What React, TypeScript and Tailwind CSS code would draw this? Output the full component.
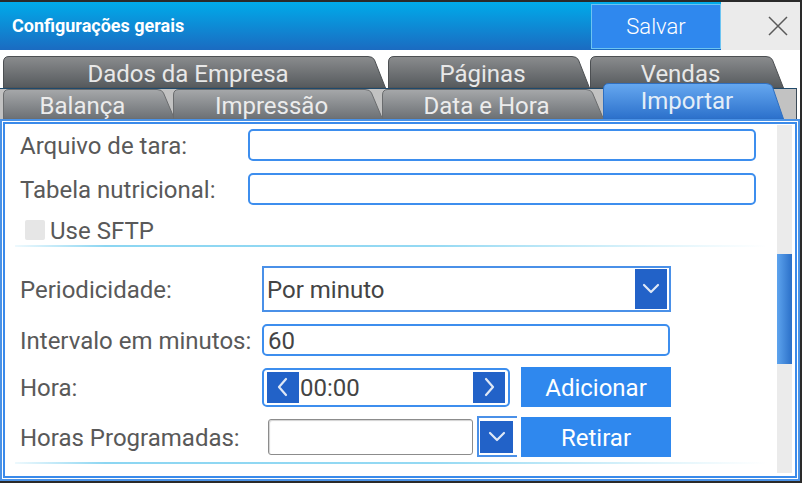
import React from 'react';

type TabProps = {
  id: string;
  w: number;
  h: number;
  label: string;
  top: string;
  bottom: string;
  stroke: string;
  className: string;
  textClass: string;
};

function Tab({ id, w, h, label, top, bottom, stroke, className, textClass }: TabProps) {
  const s = 13;
  const d = `M0.5,${h} V6 Q0.5,0.5 6,0.5 H${w - s - 5} Q${w - s},0.5 ${w - s + 1.5},4 L${w - 0.5},${h} Z`;
  return (
    <div className={`relative shrink-0 ${className}`}>
      <svg className="absolute inset-0" width={w} height={h} viewBox={`0 0 ${w} ${h}`}>
        <defs>
          <linearGradient id={id} x1="0" y1="0" x2="0" y2="1">
            <stop offset="0" stopColor={top} />
            <stop offset="1" stopColor={bottom} />
          </linearGradient>
        </defs>
        <path d={d} fill={`url(#${id})`} stroke={stroke} strokeWidth="1" />
      </svg>
      <div className={`absolute inset-0 flex items-center justify-center pr-[13px] text-[24px] leading-none ${textClass}`}>
        {label}
      </div>
    </div>
  );
}

function Chevron({ dir }: { dir: 'down' | 'left' | 'right' }) {
  const pts =
    dir === 'down' ? '9,12 16,19 23,12' : dir === 'left' ? '19,8 12,16 19,24' : '13,8 20,16 13,24';
  return (
    <svg width="32" height="32" viewBox="0 0 32 32" className="block">
      <polyline points={pts} fill="none" stroke="#dfe8f6" strokeWidth="2.2" strokeLinecap="round" strokeLinejoin="round" />
    </svg>
  );
}

function Divider() {
  return (
    <div className="-ml-[5px] -mr-[11px] h-[2px] bg-[linear-gradient(to_right,rgba(140,214,242,0.15),#8cd6f2_12%,#94d9f3_55%,rgba(200,236,248,0.6)_85%,rgba(255,255,255,0))]" />
  );
}

export default function App() {
  const label = "text-[24px] text-[#595959] leading-none pt-[2px]";
  return (
    <div className="w-[802px] h-[483px] bg-white border-t-2 border-r-2 border-b-2 border-[#2a2a2a] flex flex-col overflow-hidden font-['Roboto',sans-serif]">
      {/* Title bar */}
      <div className="h-[48px] shrink-0 flex items-stretch bg-[linear-gradient(to_bottom,#00abea,#1b6bc1)]">
        <div className="flex-1 flex items-center pl-[12px] text-white font-bold text-[18px] pb-[2px]">
          Configurações gerais
        </div>
        <div className="w-[130px] mt-[2px] mb-[1px] bg-[#2f88ee] border border-[#6cc4f2] flex items-center justify-center text-white text-[22px] font-light">
          Salvar
        </div>
        <div className="w-[79px] bg-[#ebebeb] flex items-center justify-end pr-[12px]">
          <svg width="20" height="20" viewBox="0 0 20 20">
            <path d="M1 1 L19 19 M19 1 L1 19" stroke="#5a5a5a" strokeWidth="1.5" />
          </svg>
        </div>
      </div>

      {/* Tabs */}
      <div className="h-[69px] shrink-0 flex flex-col pt-[6px]">
        <div className="h-[32px] flex pl-[3px]">
          <Tab id="t1" w={383} h={32} label="Dados da Empresa" top="#8a8c8e" bottom="#55595c" stroke="#4c4f52" className="w-[383px] h-[32px]" textClass="text-[#e8e8e8] pt-[3px]" />
          <Tab id="t2" w={202} h={32} label="Páginas" top="#8a8c8e" bottom="#55595c" stroke="#4c4f52" className="w-[202px] h-[32px] ml-[2px]" textClass="text-[#e8e8e8] pt-[3px]" />
          <Tab id="t3" w={194} h={32} label="Vendas" top="#8a8c8e" bottom="#55595c" stroke="#4c4f52" className="w-[194px] h-[32px]" textClass="text-[#e8e8e8] pt-[3px]" />
        </div>
        <div className="h-[31px] flex items-end bg-[#c2c2c2] border-t border-[#1f4a6c] border-r border-r-[#3a4a58] mr-[3px]">
          <div className="w-[3px] h-full bg-[#c2c2c2]" />
          <Tab id="t4" w={172} h={30} label="Balança" top="#a6a8aa" bottom="#6c7074" stroke="#6a6c6e" className="w-[172px] h-[30px]" textClass="text-[#ececec] pt-[3px]" />
          <Tab id="t5" w={210} h={30} label="Impressão" top="#a6a8aa" bottom="#6c7074" stroke="#6a6c6e" className="w-[210px] h-[30px] -ml-[2px]" textClass="text-[#ececec] pt-[3px]" />
          <Tab id="t6" w={222} h={30} label="Data e Hora" top="#a6a8aa" bottom="#6c7074" stroke="#6a6c6e" className="w-[222px] h-[30px] -ml-[1px]" textClass="text-[#ececec] pt-[3px]" />
          <Tab id="t7" w={181} h={36} label="Importar" top="#66a8f0" bottom="#2b70cb" stroke="#2f6fc0" className="w-[181px] h-[36px] -ml-[1px] relative z-10" textClass="text-[#e4eef8]" />
        </div>
      </div>

      {/* Panel */}
      <div className="flex-1 min-h-0 border-2 border-[#4a92e6] p-px flex">
        <div className="flex-1 border-2 border-[#3a8aea] flex min-h-0">
          <div className="flex-1 flex flex-col pl-[15px] pr-[21px] pt-[5px]">
            <div className="flex items-center h-[32px]">
              <span className={`w-[228px] ${label}`}>Arquivo de tara:</span>
              <div className="flex-1 h-full border-2 border-[#3d8eee] rounded-[5px]" />
            </div>
            <div className="flex items-center h-[32px] mt-[12px]">
              <span className={`w-[228px] ${label}`}>Tabela nutricional:</span>
              <div className="flex-1 h-full border-2 border-[#3d8eee] rounded-[5px]" />
            </div>
            <div className="flex items-center h-[20px] mt-[15px]">
              <div className="w-[20px] h-[20px] ml-[5px] bg-[#e6e6e6] rounded-[2px]" />
              <span className={`ml-[5px] ${label}`}>Use SFTP</span>
            </div>
            <div className="mt-[5px]">
              <Divider />
            </div>

            <div className="flex items-center h-[46px] mt-[19px]">
              <span className={`w-[242px] ${label}`}>Periodicidade:</span>
              <div className="w-[409px] h-full border-2 border-[#4a90e8] flex items-center justify-between pl-[3px] pr-[2px]">
                <span className="text-[24px] text-[#444] leading-none pt-[2px]">Por minuto</span>
                <div className="w-[32px] h-[40px] bg-[#2262c8] flex items-center justify-center">
                  <Chevron dir="down" />
                </div>
              </div>
            </div>

            <div className="flex items-center h-[32px] mt-[12px]">
              <span className={`w-[242px] ${label}`}>Intervalo em minutos:</span>
              <div className="w-[408px] h-full border-2 border-[#3d8eee] rounded-[5px] flex items-center pl-[4px]">
                <span className="text-[24px] text-[#444] leading-none pt-[2px]">60</span>
              </div>
            </div>

            <div className="flex items-center h-[40px] mt-[11px]">
              <span className={`w-[242px] ${label}`}>Hora:</span>
              <div className="w-[248px] h-[39px] border-2 border-[#3d8eee] rounded-[5px] flex items-center pl-[3px] pr-[3px]">
                <div className="w-[32px] h-[31px] bg-[#2262c8] flex items-center justify-center">
                  <Chevron dir="left" />
                </div>
                <span className="flex-1 pl-px text-[24px] text-[#444] leading-none pt-[2px]">00:00</span>
                <div className="w-[32px] h-[31px] bg-[#2262c8] flex items-center justify-center">
                  <Chevron dir="right" />
                </div>
              </div>
              <div className="w-[150px] h-[40px] ml-[11px] bg-[#2f88ee] flex items-center justify-center text-white text-[24px] leading-none pt-[2px]">
                Adicionar
              </div>
            </div>

            <div className="flex items-center h-[41px] mt-[9px]">
              <span className={`w-[248px] ${label}`}>Horas Programadas:</span>
              <div className="w-[205px] h-[36px] border border-[#8c8c8c] rounded-[3px] shadow-[inset_1px_1px_1px_rgba(0,0,0,0.18)]" />
              <div className="w-[40px] h-[41px] ml-[4px] border-2 border-r-0 border-[#4a90e8] pl-px pt-[3px]">
                <div className="w-[33px] h-[32px] bg-[#2262c8] flex items-center justify-center">
                  <Chevron dir="down" />
                </div>
              </div>
              <div className="w-[150px] h-[40px] ml-[4px] bg-[#2f88ee] flex items-center justify-center text-white text-[24px] leading-none pt-[2px]">
                Retirar
              </div>
            </div>
            <div className="mt-[5px]">
              <Divider />
            </div>
          </div>
          {/* Scrollbar */}
          <div className="w-[15px] mr-[3px] mt-px mb-[3px] bg-[#ebebeb] flex flex-col">
            <div className="h-[129px]" />
            <div className="h-[110px] bg-[linear-gradient(to_right,#5ea4ee,#2a6fc8)]" />
          </div>
        </div>
      </div>
    </div>
  );
}
